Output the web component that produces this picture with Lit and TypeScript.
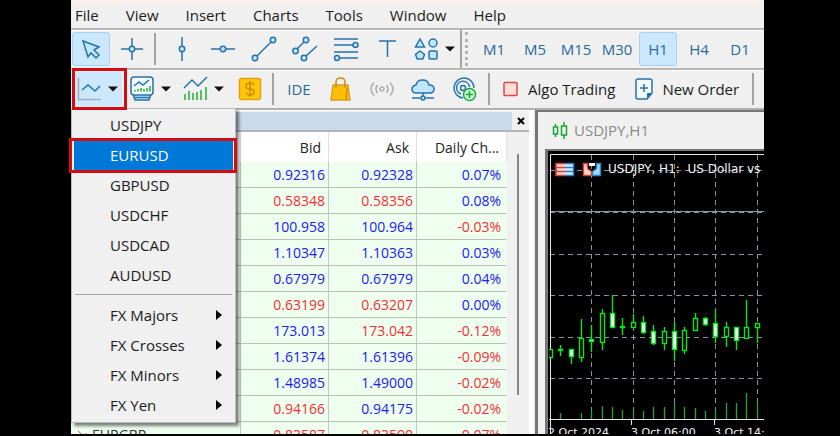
import { LitElement, html, css, svg } from "lit";
import { customElement } from "lit/decorators.js";
import { classMap } from "lit/directives/class-map.js";

const MENUS = ["File", "View", "Insert", "Charts", "Tools", "Window", "Help"];
const FRAMES = ["M1", "M5", "M15", "M30", "H1", "H4", "D1"];
const SYMBOLS = ["USDJPY", "EURUSD", "GBPUSD", "USDCHF", "USDCAD", "AUDUSD"];
const GROUPS = ["FX Majors", "FX Crosses", "FX Minors", "FX Yen"];

type Quote = [string, string, string, string, boolean, boolean];
// symbol, bid, ask, daily change, bid rising, ask rising
const QUOTES: Quote[] = [
  ["", "0.92316", "0.92328", "0.07%", true, true],
  ["", "0.58348", "0.58356", "0.08%", false, false],
  ["", "100.958", "100.964", "-0.03%", true, true],
  ["", "1.10347", "1.10363", "0.03%", true, true],
  ["", "0.67979", "0.67979", "0.04%", true, true],
  ["", "0.63199", "0.63207", "0.00%", false, false],
  ["", "173.013", "173.042", "-0.12%", true, false],
  ["", "1.61374", "1.61396", "-0.09%", true, true],
  ["", "1.48985", "1.49000", "-0.02%", true, true],
  ["", "0.94166", "0.94175", "-0.02%", false, true],
  ["EURGBP", "0.83587", "0.83590", "-0.07%", false, false],
];

type Candle = [number, number, number, number, boolean, number];
// high, body top, body bottom, low, filled, volume
const CANDLES: Candle[] = [
  [196, 196, 204, 204, false, 0],
  [192, 196, 197, 202, false, 6],
  [196, 196, 203, 210, true, 0],
  [166, 185, 204, 208, false, 6],
  [172, 186, 188, 198, true, 9],
  [156, 160, 189, 196, false, 13],
  [142, 160, 174, 174, true, 12],
  [165, 173, 174, 181, false, 9],
  [161, 169, 174, 174, false, 8],
  [163, 169, 179, 180, true, 8],
  [172, 178, 190, 191, true, 12],
  [174, 178, 190, 196, false, 12],
  [169, 178, 196, 207, true, 16],
  [174, 177, 197, 200, false, 12],
  [160, 165, 177, 177, false, 11],
  [164, 165, 171, 172, true, 8],
  [157, 170, 183, 189, true, 9],
  [169, 174, 183, 193, false, 16],
  [174, 174, 187, 196, true, 16],
  [147, 174, 185, 185, false, 26],
  [170, 170, 174, 189, false, 16],
];

const icon = (body: unknown) =>
  html`<svg class="icon" width="26" height="26" viewBox="0 0 26 26" aria-hidden="true">${body}</svg>`;
const caret = html`<svg class="caret" width="10" height="6" viewBox="0 0 10 6" aria-hidden="true"><path d="M0 .5h10L5 5.5z" /></svg>`;

const ICONS = {
  cursor: icon(svg`<path class="ln lt" d="M5 5l16 6-5 3 5 5-3 3-5-5-3 4z" />`),
  cross: icon(svg`<path class="ln" d="M13 2v8M13 16v8M2 13h8M16 13h8" /><circle class="ln lt" cx="13" cy="13" r="2.7" />`),
  vline: icon(svg`<path class="ln" d="M13 1v9M13 16v9" /><circle class="ln lt" cx="13" cy="13" r="2.7" />`),
  hline: icon(svg`<path class="ln" d="M1 13h9M16 13h9" /><circle class="ln lt" cx="13" cy="13" r="2.7" />`),
  trend: icon(svg`<path class="ln" d="M6 20L20 6" /><circle class="ln lt" cx="4" cy="22" r="2.7" /><circle class="ln lt" cx="22" cy="4" r="2.7" />`),
  channel: icon(svg`<path class="ln" d="M5 13l8-8M14 20L25 10" /><circle class="ln lt" cx="3.5" cy="15" r="2.7" /><circle class="ln lt" cx="14" cy="4" r="2.7" /><circle class="ln lt" cx="12" cy="22" r="2.7" />`),
  fibo: icon(svg`<path class="ln" d="M1 3h24M1 9h19M1 16h24M7 22h18" /><circle class="ln lt" cx="22.5" cy="9" r="2.5" /><circle class="ln lt" cx="4" cy="22" r="2.5" />`),
  text: icon(svg`<path class="ln" d="M5 5h17M13.500 5v16" />`),
  shapes: icon(svg`<path class="ln lt" d="M6 3l4.500 8h-9zM6 15l4.500 3.500-1.700 4.500H3.200L1.500 18.500z" /><circle class="ln lt" cx="19" cy="7" r="4" /><rect class="ln lt" x="15" y="15" width="8" height="8" rx="1" />`),
  line: icon(svg`<path class="ax" d="M1.500 2v22M1 23.500h23" /><path class="ln" d="M5 14l6-5 7 6 5-5" />`),
  template: icon(svg`<path class="ln lt" d="M3 18h18l-2 6H5z" /><rect class="ln wh" x="1" y="1" width="22" height="18" rx="3" /><path class="ln" d="M5 21.500h14M4 10l5-4 4 3 6-5" /><path class="gr" d="M5 15.500v-1.500M8 15.500V13M11 15.500V12M14 15.500V13M17 15.500V12M20 15.500V10" />`),
  indicators: icon(svg`<path class="ln" d="M1 12l8-8 6 6 9-9" /><path class="gr" d="M2 24v-6M6 24v-9M10 24v-7M14 24v-8M18 24v-10M23 24V11" />`),
  dollar: icon(svg`<rect x="2.500" y="2.500" width="21" height="21" rx="2" fill="#ffc60a" stroke="#e4a013" stroke-width="1.500" /><path d="M17 9q-1-2-4-2-4 0-4 3t4 3q4 0 4 3t-4 3q-3 0-4-2M13 5v16" fill="none" stroke="#c98a00" stroke-width="1.500" />`),
  bag: icon(svg`<path d="M5 9h15l2 15H3z" fill="#ffbf08" stroke="#dc9a14" stroke-width="1.300" /><path d="M8 12V6q0-4 4.500-4T17 6v6M19 12l-1 12" fill="none" stroke="#cf8d12" stroke-width="1.500" />`),
  signal: icon(svg`<circle class="sg" cx="13" cy="13" r="2" /><path class="sg" d="M8.500 9q-3 4 0 8M17.500 9q3 4 0 8M5 6.500q-6 6.500 0 13M21 6.500q6 6.500 0 13" />`),
  cloud: icon(svg`<path class="ln lt" d="M6 17q-4 0-4-4 0-3 4-4 1-5 6.500-5T19 9q5 0 5 4 0 4-4 4z" /><path class="ln" d="M13 17v3M2 22h8M16 22h8" /><circle class="ln lt" cx="13" cy="22" r="2" />`),
  vps: icon(svg`<path class="ln" d="M12 22A10 10 0 1 1 23 12M10 18A6.500 6.500 0 1 1 18.500 11" /><circle class="ln" cx="12" cy="12" r="2.500" /><circle cx="18.500" cy="18.500" r="6" fill="#cdf8d3" stroke="#18a83a" stroke-width="1.500" /><path d="M18.500 15v7M15 18.500h7" stroke="#18a83a" stroke-width="1.500" />`),
  stop: html`<svg width="15" height="16" viewBox="0 0 15 16" aria-hidden="true"><rect x="1" y="1.500" width="13" height="13" rx="1" fill="#ffdcd8" stroke="#d94848" stroke-width="1.500" /></svg>`,
  order: html`<svg width="20" height="24" viewBox="0 0 20 24" aria-hidden="true"><path class="ln wh" d="M4 2h12q2 0 2 2v12l-5 6H4q-2 0-2-2V4q0-2 2-2z" /><path d="M18 16l-5 6v-5q0-1 1-1z" fill="#1c6ea8" /><path class="ln" d="M10 7v8M6 11h8" /></svg>`,
};

@customElement("price-chart")
export class PriceChart extends LitElement {
  static styles = css`
    :host { display: block; flex: 1; min-height: 0; overflow: hidden; background: #000; }
    svg { display: block; width: 100%; height: 300px; }
    .grid { stroke: #8894a2; stroke-dasharray: 5 4; }
    .frame { stroke: #e8e8e8; fill: none; }
    .price { stroke: #8498a8; }
    .wick { stroke: #00e818; stroke-width: 1.4; }
    .body { stroke: #00e818; stroke-width: 1.4; fill: #000; }
    .full { fill: #fff; }
    .vol { stroke: #2f9a37; stroke-width: 1.4; }
    text { fill: #f4f4f4; font: 11px "DejaVu Sans", sans-serif; }
    .caption { font-size: 12px; }
  `;

  render() {
    const x = (i: number) => Math.round((i * 31) / 3) + 1;
    return html`<svg role="img" aria-label="USDJPY hourly chart">
      ${[17, 59, 101, 142, 184, 225].map((y) => svg`<path class="grid" d="M1 ${y + 0.5}h2000" />`)}
      ${[4, 8, 12, 16, 20].map((i) => svg`<path class="grid" d="M${x(i) + 0.5} 2v264" />`)}
      <path class="price" d="M1 58.5h2000" />
      <path class="frame" d="M2000 1.5H1.5V283M0 266.500H2000M82.500 267v5M165.500 267v5" />
      ${CANDLES.map(([hi, top, bottom, low, full, vol], i) => {
        const cx = x(i) + 0.5;
        return svg`<path class="vol" d="M${cx} ${266 - vol}v${vol}" />
          <path class="wick" d="M${cx} ${hi}V${low + 1}" />
          <rect class="body ${full ? "full" : ""}" x=${cx - 2} y=${top + 0.5} width="4" height=${bottom - top} />`;
      })}
      <rect x="7" y="10" width="9" height="13" fill="#f8d8d0" /><rect x="16" y="10" width="9" height="13" fill="#d5edff" />
      <path d="M7 10v13M6.500 10.500H16M6.500 14.500H16M6.500 18.500H16M6.500 22.500H16" stroke="#df4036" stroke-width="1.500" />
      <path d="M24.500 10v13M16 10.500h9M16 14.500h9M16 18.500h9M16 22.500h9" stroke="#2a7fd0" stroke-width="1.500" />
      <path d="M34.500 10.500h4v5l4 3v4h-8z" fill="#ffd9c6" stroke="#df4036" stroke-width="1.500" />
      <path d="M51.500 10.500h-4v5l-4 3v4h8z" fill="#a4dcff" stroke="#2a7fd0" stroke-width="1.500" />
      <path d="M40 10h6v3h-6z" fill="#fff" />
      <text class="caption" x="59" y="20">USDJPY, H1:&nbsp; US Dollar vs</text>
      <text x="-1" y="283">2 Oct 2024</text>
      <text x="82" y="283">3 Oct 06:00</text>
      <text x="165" y="283">3 Oct 14:00</text>
    </svg>`;
  }
}

@customElement("market-watch")
export class MarketWatch extends LitElement {
  static styles = css`
    :host { display: block; overflow: hidden; background: #f0f0f0; border-top: 1px solid #fff; border-right: 4px solid #fff; box-sizing: border-box; }
    .head { display: flex; align-items: center; height: 18px; margin-top: 1px; padding-left: 5px; border-bottom: 2px solid #b4b4b4; }
    .band { flex: 1; height: 18px; background: #cadaea; }
    .close { width: 17px; padding: 0; border: 0; background: none; display: grid; place-items: center; }
    .close path { stroke: #000; stroke-width: 2; }
    .area { display: flex; }
    table { flex: 1; border-collapse: separate; border-spacing: 0; table-layout: fixed; background: #fff; font: 14px "Open Sans", "Noto Sans", sans-serif; }
    .bid, .ask { width: 88px; }
    .change { width: 90px; }
    th { height: 30px; box-sizing: border-box; padding: 0 7px; font-weight: 400; text-align: right; color: #222; border-right: 1px solid #e0e0e0; white-space: nowrap; }
    td { height: 26px; box-sizing: border-box; padding: 0 3px; text-align: right; line-height: 25px; background: #eefff0; border-right: 1px solid #c4c8c4; border-bottom: 1px solid #b9bdb9; color: #f03030; }
    td:last-child { padding-right: 5px; border-right-color: transparent; }
    td.name { color: #303030; text-align: left; }
    td.up { color: #2020ee; }
    .dir { display: inline-block; width: 11px; height: 10px; padding: 0 4px 0 3px; fill: none; stroke: #c9504a; }
    .gutter { width: 22px; display: flex; justify-content: center; padding-top: 22px; box-sizing: border-box; }
    .thumb { width: 2px; height: 241px; background: #858585; }
  `;

  render() {
    const tone = (up: boolean) => classMap({ up });
    return html`
      <div class="head">
        <div class="band"></div>
        <button class="close" aria-label="Close"><svg width="8" height="8"><path d="M1 1l6 6M7 1L1 7" /></svg></button>
      </div>
      <div class="area">
        <table>
          <thead>
            <tr><th></th><th class="bid">Bid</th><th class="ask">Ask</th><th class="change">Daily Ch...</th></tr>
          </thead>
          <tbody>
            ${QUOTES.map(
              ([name, bid, ask, change, bidUp, askUp]) => html`<tr>
                <td class="name"><svg class="dir" viewBox="0 0 11 10"><path d="M1 1l8 7M9 3v5H4" /></svg>${name}</td>
                <td class=${tone(bidUp)}>${bid}</td>
                <td class=${tone(askUp)}>${ask}</td>
                <td class=${tone(!change.startsWith("-"))}>${change}</td>
              </tr>`
            )}
          </tbody>
        </table>
        <div class="gutter"><div class="thumb"></div></div>
      </div>
    `;
  }
}

@customElement("app-root")
export class AppRoot extends LitElement {
  static styles = css`
    :host { display: flex; flex-direction: column; height: 100vh; box-sizing: border-box; padding: 0 76px 2px 71px; background: #000; overflow: hidden; color: #1c1c1c; font: 15px "Open Sans", "Noto Sans", sans-serif; }
    button { font: inherit; color: inherit; border: 0; background: none; padding: 0; white-space: nowrap; box-sizing: border-box; }
    .menubar { display: flex; gap: 27px; height: 28px; flex: none; box-sizing: border-box; padding: 2px 4px 0; background: linear-gradient(#fbf0ec, #f0f0f0 8px); }
    .bar { display: flex; align-items: center; gap: 3px; height: 40px; box-sizing: border-box; padding: 0 1px; background: #f0f0f0; border-top: 2px solid #b6b6b6; box-shadow: inset 0 1px #fff; flex: none; }
    .charts { gap: 7px; padding-left: 5px; position: relative; z-index: 2; }
    .tool { width: 38px; height: 34px; display: grid; place-items: center; border: 1px solid transparent; border-radius: 3px; color: #276a9c; }
    .on { background: #cce8ff; border-color: #a3d2f6; }
    .split { display: flex; align-items: center; width: 48px; padding-left: 5px; gap: 5px; }
    .rule { width: 2px; height: 32px; background: #a3a3a3; }
    .gap { margin-right: 4px; }
    .edge { height: 38px; }
    .grip { height: 34px; border-left: 3px dotted #b4b4b4; margin-right: 4px; }
    .drop { display: flex; align-items: center; gap: 5px; width: 46px; height: 34px; padding-left: 1px; border-radius: 3px; }
    .holder { position: relative; z-index: 3; }
    .mark { position: absolute; inset: -4px -5px -4px -4px; border: 3px solid #d40c14; pointer-events: none; }
    .small { width: 30px; height: 34px; display: grid; place-items: center; }
    .mid { width: 34px; height: 34px; display: grid; place-items: center; color: #276a9c; }
    .ide { width: 36px; }
    .action { display: flex; align-items: center; gap: 10px; height: 34px; padding: 0 6px; }
    .near { gap: 8px; }
    .icon { display: block; flex: none; }
    .caret { fill: #111; }
    .ln { fill: none; stroke: #2673aa; stroke-width: 1.5; }
    .lt { fill: #bfe8ff; }
    .wh { fill: #f2faff; }
    .ax { fill: none; stroke: #a3aeb7; stroke-width: 1.5; }
    .gr { fill: none; stroke: #20ac3a; stroke-width: 1.5; }
    .sg { fill: none; stroke: #aeaeae; stroke-width: 1.5; }
    .popup { position: absolute; left: 0; top: 38px; width: 165px; box-sizing: border-box; padding: 1px 2px 2px; background: #f0f0f0; border: 1px solid #bdbdbd; box-shadow: 3px 3px 3px rgba(0, 0, 0, 0.5); }
    .item { position: relative; display: flex; align-items: center; justify-content: space-between; width: 100%; height: 30px; padding: 0 11px 0 36px; }
    .item.picked { background: #0078d7; color: #fff; }
    .ring { position: absolute; inset: -2px -4px -3px -5px; border: 3px solid #d40c14; }
    .line { height: 1px; margin: 4px 1px 5px; border: 0; background: #a6a6a6; }
    .work { flex: 1; min-height: 0; overflow: hidden; display: grid; grid-template-columns: 2fr 1fr; background: #f0f0f0; border-top: 2px solid #b0b0b0; }
    .doc { display: flex; flex-direction: column; min-width: 0; border-left: 3px solid #767676; border-top: 2px solid #767676; margin-left: 2px; }
    .title { display: flex; align-items: center; gap: 6px; height: 37px; box-sizing: border-box; padding: 0 0 2px 14px; color: #8a8a8a; }
    .title svg { fill: none; stroke: #16a932; stroke-width: 1.5; }
    .canvas { display: flex; flex: 1; min-height: 0; margin-left: 7px; padding: 2px 0 0 1px; background: #000; border-left: 3px solid #777; border-top: 2px solid #777; }
  `;

  render() {
    const tool = (name: string, body: unknown, on = false) =>
      html`<button class=${classMap({ tool: true, on })} aria-label=${name}>${body}</button>`;
    return html`
      <nav class="menubar">${MENUS.map((m) => html`<button>${m}</button>`)}</nav>
      <div class="bar">
        ${tool("Cursor", ICONS.cursor, true)} ${tool("Crosshair", ICONS.cross)}
        <span class="rule gap"></span>
        ${tool("Vertical line", ICONS.vline)} ${tool("Horizontal line", ICONS.hline)}
        ${tool("Trendline", ICONS.trend)} ${tool("Channel", ICONS.channel)}
        ${tool("Fibonacci", ICONS.fibo)} ${tool("Text", ICONS.text)}
        <button class="split" aria-label="Shapes">${ICONS.shapes}${caret}</button>
        <span class="rule edge"></span><span class="grip"></span>
        ${FRAMES.map((f) => tool(f, f, f === "H1"))}
      </div>
      <div class="bar charts">
        <span class="holder">
          <button class="drop on" aria-label="New chart" aria-expanded="true">${ICONS.line}${caret}</button>
          <span class="mark"></span>
        </span>
        <button class="drop" aria-label="Templates">${ICONS.template}${caret}</button>
        <button class="drop" aria-label="Indicators">${ICONS.indicators}${caret}</button>
        <button class="small" aria-label="Quotes">${ICONS.dollar}</button>
        <span class="rule"></span>
        <button class="mid ide">IDE</button>
        <button class="mid" aria-label="Market">${ICONS.bag}</button>
        <button class="mid" aria-label="Signals">${ICONS.signal}</button>
        <button class="mid" aria-label="Cloud">${ICONS.cloud}</button>
        <button class="mid" aria-label="Hosting">${ICONS.vps}</button>
        <span class="rule"></span>
        <button class="action">${ICONS.stop}Algo Trading</button>
        <button class="action near">${ICONS.order}New Order</button>
        <span class="rule"></span>
        <div class="popup" role="menu">
          ${SYMBOLS.map((s) => {
            const picked = s === "EURUSD";
            return html`<button role="menuitem" class=${classMap({ item: true, picked })}>${s}${picked ? html`<span class="ring"></span>` : ""}</button>`;
          })}
          <hr class="line" />
          ${GROUPS.map(
            (g) => html`<button role="menuitem" class="item">${g}<svg width="6" height="10" aria-hidden="true"><path d="M0 0v10l6-5z" /></svg></button>`
          )}
        </div>
      </div>
      <main class="work">
        <market-watch></market-watch>
        <section class="doc">
          <div class="title">
            <svg width="16" height="18" viewBox="0 0 16 18" aria-hidden="true"><path d="M1.500 6h4v7h-4zM3.500 3v3M3.500 13v3M9.500 5h5v9h-5zM12 1v4M12 14v4" /></svg>
            USDJPY,H1
          </div>
          <div class="canvas"><price-chart></price-chart></div>
        </section>
      </main>
    `;
  }
}
